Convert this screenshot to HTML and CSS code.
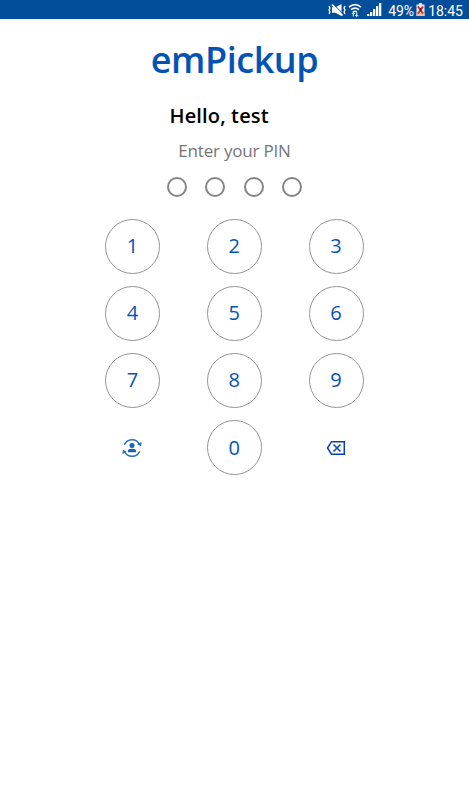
FILE: index.html
```
<!DOCTYPE html>
<html lang="en">

<head>
    <meta charset="UTF-8">
    <meta name="viewport" content="width=device-width, initial-scale=1.0">
    <title>emPickup</title>
    <link rel="stylesheet" href="styles.css">
</head>

<body>

    <div class="status-bar">
        <!-- vibrate / muted -->
        <svg class="icon-mute" width="19" height="14" viewBox="0 0 19 14" fill="none" stroke="#fff">
            <path d="M4 4.300h3.500L13.500 1v12L7.500 9.700H4z" fill="#fff" stroke="none"/>
            <path d="M5.500 1.300l9 9" stroke="#034e9b" stroke-width="1"/>
            <path d="M4 1.500l10.500 11" stroke-width="1.800"/>
            <path d="M1 3l1 2-1 2 1 2-1 2M17 3l-1 2 1 2-1 2 1 2" stroke-width="1.300"/>
        </svg>
        <!-- wifi -->
        <svg class="icon-wifi" width="14" height="14" viewBox="0 0 14 14" fill="none" stroke="#fff" stroke-width="1.700">
            <path d="M1 4.200q6-5 12 0M3 6.700q4-3.300 8 0M5 9q2-1.500 4 0"/>
            <path d="M5.300 13.500v-4M3.800 11l1.500-1.500L6.800 11M8.700 9.500v4M7.200 12l1.500 1.500 1.500-1.500" stroke-width="1"/>
        </svg>
        <!-- signal -->
        <svg class="icon-signal" width="15" height="13" viewBox="0 0 15 13" fill="#fff">
            <path d="M0 11h2.300v2H0zM3 9h2.300v4H3zM6 6h2.300v7H6zM9 3h2.300v10H9zM12 0h2.300v13H12z"/>
        </svg>
        <span class="battery-text">49%</span>
        <!-- battery -->
        <svg class="icon-battery" width="9" height="13" viewBox="0 0 9 13">
            <path d="M3 0h3v1.500h2.500V13h-8V1.500H3z" fill="#e4e8ee"/>
            <path d="M.5 10h8v3h-8z" fill="#f5b9a5"/>
            <path d="M2 3.500l5 7M7 3.500l-5 7" stroke="#d92b12" stroke-width="2"/>
            <path d="M4 5h1.500v3H4z" fill="#7c1a10"/>
        </svg>
        <span class="clock">18:45</span>
    </div>

    <div class="container">
        <h1>emPickup</h1>
        <p class="greeting">Hello, test</p>
        <p class="hint">Enter your PIN</p>

        <div class="pin-dots">
            <span class="dot"></span>
            <span class="dot"></span>
            <span class="dot"></span>
            <span class="dot"></span>
        </div>

        <div class="keypad">
            <button class="key">1</button>
            <button class="key">2</button>
            <button class="key">3</button>
            <button class="key">4</button>
            <button class="key">5</button>
            <button class="key">6</button>
            <button class="key">7</button>
            <button class="key">8</button>
            <button class="key">9</button>
            <button class="key key-icon" aria-label="Switch user">
                <svg width="20" height="20" viewBox="0 0 20 20" fill="none" stroke="#2470bd" stroke-width="1.500">
                    <path d="M2.300 6.800A8.300 8.300 0 0 1 17.500 6.500M17.700 13.200A8.300 8.300 0 0 1 2.500 13.500"/>
                    <path d="M15.200 6.300l4 2 .3-4.300zM4.800 13.700l-4-2-.3 4.300z" fill="#2470bd" stroke="none"/>
                    <circle cx="10" cy="7.500" r="2.500" fill="#1763b5" stroke="none"/>
                    <path d="M5.900 14.300v-1.300q0-2.200 4.100-2.200t4.100 2.200v1.300z" fill="#1763b5" stroke="none"/>
                </svg>
            </button>
            <button class="key">0</button>
            <button class="key key-icon" aria-label="Delete">
                <svg width="20" height="16" viewBox="0 0 20 16" fill="none" stroke="#0a3fb0" stroke-width="1.500">
                    <path d="M5.500 1.700h12.800v12.500H5.500L1.500 8z"/>
                    <path d="M7.500 4.500l7 7M14.500 4.500l-7 7" stroke="#0d52ae" stroke-width="1.700"/>
                </svg>
            </button>
        </div>
    </div>

</body>

</html>
```

FILE: styles.css
```
body {
    margin: 0;
    min-height: 100vh;
    background-color: #fff;
    font-family: "Open Sans", "Noto Sans", sans-serif;
}

.status-bar {
    display: flex;
    justify-content: flex-end;
    align-items: center;
    box-sizing: border-box;
    height: 19px;
    padding-right: 6px;
    background-color: #034e9b;
    color: #fff;
    font-family: Roboto, sans-serif;
    font-size: 14px;
    line-height: 19px;
}

.icon-wifi {
    margin-left: 1px;
}

.icon-signal {
    margin: 0 6px 0 5px;
}

.battery-text,
.clock {
    padding-top: 3px;
}

.icon-battery {
    margin: 0 3px 0 2px;
}

.container {
    display: flex;
    flex-direction: column;
    align-items: center;
}

h1 {
    margin: 17px 0 0;
    color: #0552b5;
    font-size: 36px;
    font-weight: 600;
    line-height: 48px;
    letter-spacing: -0.45px;
}

.greeting {
    width: 130px;
    margin: 18px 0 0;
    color: #000;
    font-size: 20px;
    font-weight: 600;
    line-height: 28px;
    letter-spacing: 0.15px;
    white-space: nowrap;
}

.hint {
    margin: 9px 0 0;
    color: #757575;
    font-size: 17px;
    line-height: 24px;
    letter-spacing: -0.2px;
}

.pin-dots {
    display: flex;
    gap: 18.300px;
    margin-top: 14px;
}

.dot {
    box-sizing: border-box;
    width: 20px;
    height: 20px;
    border: 2px solid #858585;
    border-radius: 50%;
}

.keypad {
    display: grid;
    grid-template-columns: repeat(3, 55px);
    gap: 12.200px 46.800px;
    margin: 21.500px 0.500px 0 0;
}

.key {
    display: flex;
    justify-content: center;
    align-items: center;
    box-sizing: border-box;
    width: 55px;
    height: 55px;
    padding: 0 0 1px;
    border: 1px solid #959595;
    border-radius: 50%;
    background: none;
    color: #0552b8;
    font-family: inherit;
    font-size: 20px;
    cursor: pointer;
}

.key-icon {
    padding: 0;
    border-color: transparent;
}
```
